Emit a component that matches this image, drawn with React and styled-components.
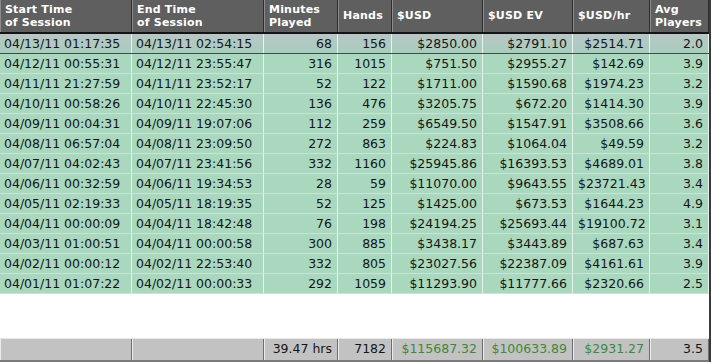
import React from 'react'
import styled, { createGlobalStyle } from 'styled-components'

const GlobalStyle = createGlobalStyle`
    html, body { margin:0; padding:0; background:#fff; }
    #root { width:711px; height:362px; overflow:hidden; }
`;

const cols = '132px 132px 74px 54px 91px 90px 77px 59px';

const Grid = styled.div`
    width:711px;
    height:362px;
    display:flex;
    flex-direction:column;
    font-family:"DejaVu Sans", Verdana, sans-serif;
    box-sizing:border-box;
    border-right:2px solid #3a3a3a;
`;

const HeadRow = styled.div`
    display:grid;
    grid-template-columns:${cols};
    height:32px;
    background:#5f5f5f;
    border-bottom:2px solid #141414;
`;

const HeadCell = styled.div`
    display:flex;
    align-items:center;
    padding:0 5px;
    color:#fff;
    font-weight:bold;
    font-size:11px;
    line-height:13.5px;
    border-right:1px solid #2e2e2e;
    box-shadow:inset 1px 0 0 #8c8c8c;
    white-space:pre-line;
    letter-spacing:0.2px;
`;

const Row = styled.div`
    display:grid;
    grid-template-columns:${cols};
    height:19px;
    border-bottom:1px solid ${p => p.$selected ? '#3c4a48' : '#c6e6d6'};
    background:${p => p.$selected ? 'linear-gradient(#b9c6c6, #a7cdbd)' : '#a9d8bf'};
`;

const Cell = styled.div`
    font-size:12.5px;
    line-height:19px;
    color:#151515;
    padding:0 ${p => p.$right ? '5px' : '4px'};
    text-align:${p => p.$right ? 'right' : 'left'};
    border-right:1px solid #e4f3ec;
    white-space:nowrap;
    overflow:hidden;
`;

const Gap = styled.div`
    flex:1;
    background:#fff;
`;

const Foot = styled.div`
    display:grid;
    grid-template-columns:${cols};
    height:21px;
    background:#c2c2c2;
    border-top:1px solid #e8e8e8;
    border-bottom:2px solid #7a7a7a;
`;

const FootCell = styled.div`
    font-size:12.5px;
    line-height:19px;
    padding:0 5px;
    text-align:right;
    color:${p => p.$money ? '#3a8a3a' : '#151515'};
    border-right:1px solid #6e6e6e;
    box-shadow:inset 1px 0 0 #ececec;
    white-space:nowrap;
`;

const headers = [
    'Start Time\nof Session',
    'End Time\nof Session',
    'Minutes\nPlayed',
    'Hands',
    '$USD',
    '$USD EV',
    '$USD/hr',
    'Avg\nPlayers',
];

const rows = [
    ['04/13/11 01:17:35', '04/13/11 02:54:15', '68', '156', '$2850.00', '$2791.10', '$2514.71', '2.0'],
    ['04/12/11 00:55:31', '04/12/11 23:55:47', '316', '1015', '$751.50', '$2955.27', '$142.69', '3.9'],
    ['04/11/11 21:27:59', '04/11/11 23:52:17', '52', '122', '$1711.00', '$1590.68', '$1974.23', '3.2'],
    ['04/10/11 00:58:26', '04/10/11 22:45:30', '136', '476', '$3205.75', '$672.20', '$1414.30', '3.9'],
    ['04/09/11 00:04:31', '04/09/11 19:07:06', '112', '259', '$6549.50', '$1547.91', '$3508.66', '3.6'],
    ['04/08/11 06:57:04', '04/08/11 23:09:50', '272', '863', '$224.83', '$1064.04', '$49.59', '3.2'],
    ['04/07/11 04:02:43', '04/07/11 23:41:56', '332', '1160', '$25945.86', '$16393.53', '$4689.01', '3.8'],
    ['04/06/11 00:32:59', '04/06/11 19:34:53', '28', '59', '$11070.00', '$9643.55', '$23721.43', '3.4'],
    ['04/05/11 02:19:33', '04/05/11 18:19:35', '52', '125', '$1425.00', '$673.53', '$1644.23', '4.9'],
    ['04/04/11 00:00:09', '04/04/11 18:42:48', '76', '198', '$24194.25', '$25693.44', '$19100.72', '3.1'],
    ['04/03/11 01:00:51', '04/04/11 00:00:58', '300', '885', '$3438.17', '$3443.89', '$687.63', '3.4'],
    ['04/02/11 00:00:12', '04/02/11 22:53:40', '332', '805', '$23027.56', '$22387.09', '$4161.61', '3.9'],
    ['04/01/11 01:07:22', '04/02/11 00:00:33', '292', '1059', '$11293.90', '$11777.66', '$2320.66', '2.5'],
];

const totals = ['', '', '39.47 hrs', '7182', '$115687.32', '$100633.89', '$2931.27', '3.5'];

export default function App() {
    return (
        <>
            <GlobalStyle />
            <Grid>
                <HeadRow>
                    {headers.map(h => <HeadCell key={h}>{h}</HeadCell>)}
                </HeadRow>
                {rows.map((r, i) => (
                    <Row key={i} $selected={i === 0}>
                        {r.map((v, j) => <Cell key={j} $right={j > 1}>{v}</Cell>)}
                    </Row>
                ))}
                <Gap />
                <Foot>
                    {totals.map((v, j) => (
                        <FootCell key={j} $money={j >= 4 && j <= 6}>{v}</FootCell>
                    ))}
                </Foot>
            </Grid>
        </>
    )
}
